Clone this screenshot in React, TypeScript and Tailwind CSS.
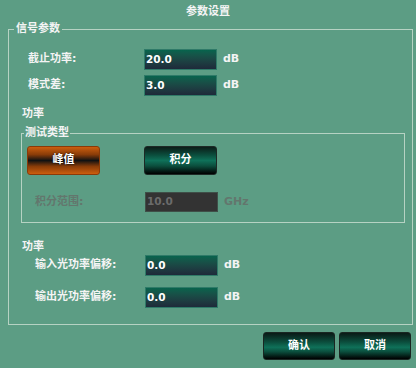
import React from "react";

const font = { fontFamily: '"DejaVu Sans", "Noto Sans CJK SC", sans-serif' };

export default function App() {
  return (
    <div className="w-[416px] h-[368px] bg-[#5c9d84] overflow-hidden select-none" style={font}>
      <div className="h-[21px] pt-[4px] text-center text-[11px] leading-[16px] font-bold text-[#f4f4f4]">参数设置</div>
      <fieldset className="ml-[8px] mr-[3px] border border-[#b6d2c3] pb-[16px]">
        <legend className="ml-[5px] px-[2px] text-[11px] leading-[16px] font-bold text-[#f4f4f4]">信号参数</legend>
        <div className="mt-[12px] flex flex-col gap-[5px]">
          <Row label="截止功率:" value="20.0" unit="dB" labelLeft={19} inputLeft={135} />
          <Row label="模式差:" value="3.0" unit="dB" labelLeft={19} inputLeft={135} />
        </div>
        <div className="mt-[10px] pl-[13px] text-[11px] leading-[15px] font-bold text-[#f4f4f4]">功率</div>
        <fieldset className="mt-[4px] ml-[12px] mr-[7px] border border-[#b6d2c3] pb-[10px]">
          <legend className="ml-[2px] px-[1px] text-[11px] leading-[16px] font-bold text-[#f4f4f4]">测试类型</legend>
          <div className="mt-[5px] flex items-center">
            <div className="ml-[5px] w-[73px] h-[29px] rounded-[3px] border border-[#8a3a08] bg-[linear-gradient(to_bottom,#cc5e0e_0%,#8a3c08_28%,#121212_50%,#8a3c08_72%,#cc5e0e_100%)] flex items-center justify-center text-[11px] font-bold text-white [text-shadow:0_0_2px_#000]">峰值</div>
            <div className="ml-[44px] w-[73px] h-[29px] rounded-[3px] border border-[#1d2a26] bg-[linear-gradient(to_bottom,#0b1d18_0%,#0b4e3d_30%,#0f7159_50%,#0b4e3d_70%,#000000_100%)] flex items-center justify-center text-[11px] font-bold text-white">积分</div>
          </div>
          <div className="mt-[17px]">
            <Row label="积分范围:" value="10.0" unit="GHz" labelLeft={13} inputLeft={123} disabled />
          </div>
        </fieldset>
        <div className="mt-[16px] pl-[13px] text-[11px] leading-[15px] font-bold text-[#f4f4f4]">功率</div>
        <div className="mt-[1px] flex flex-col gap-[11px]">
          <Row label="输入光功率偏移:" value="0.0" unit="dB" labelLeft={26} inputLeft={136} />
          <Row label="输出光功率偏移:" value="0.0" unit="dB" labelLeft={26} inputLeft={136} />
        </div>
      </fieldset>
      <div className="mt-[7px] mr-[5px] flex justify-end gap-[4px]">
        <Btn>确认</Btn>
        <Btn>取消</Btn>
      </div>
    </div>
  );
}

function Btn({ children }: { children: React.ReactNode }) {
  return (
    <div className="w-[72px] h-[28px] rounded-[3px] border border-[#1a2622] bg-[linear-gradient(to_bottom,#0a1a16_0%,#0b4e3d_35%,#0f7159_55%,#0b4e3d_72%,#000000_100%)] flex items-center justify-center text-[11px] font-bold text-white">
      {children}
    </div>
  );
}

function Row({ label, value, unit, labelLeft, inputLeft, disabled }: { label: string; value: string; unit: string; labelLeft: number; inputLeft: number; disabled?: boolean }) {
  return (
    <div className="flex items-center">
      <div style={{ width: inputLeft, paddingLeft: labelLeft }} className={`shrink-0 text-[11px] font-bold whitespace-nowrap ${disabled ? "text-[#63766d]" : "text-[#f4f4f4]"}`}>{label}</div>
      {disabled ? (
        <div className="w-[73px] h-[20px] bg-[#333333] border border-[#3f4f48] flex items-center pl-[1px] text-[10.5px] font-bold text-[#6b6b6b]">{value}</div>
      ) : (
        <div className="w-[73px] h-[21px] bg-gradient-to-b from-[#06644d] to-[#1e2a3a] border border-[#2f7a68] flex items-center pl-[1px] text-[10.5px] font-bold text-white">{value}</div>
      )}
      <div className={`ml-[6px] text-[11px] font-bold ${disabled ? "text-[#63766d]" : "text-[#f4f4f4]"}`}>{unit}</div>
    </div>
  );
}
